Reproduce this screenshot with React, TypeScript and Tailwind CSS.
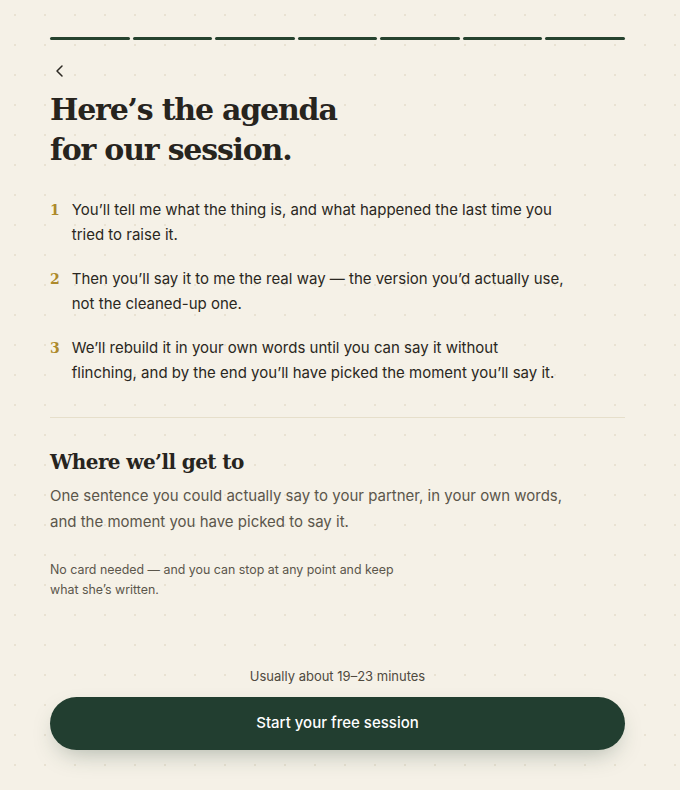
import React from "react"

const serif = "font-['DejaVu_Serif',serif]"

const steps = [
  "You’ll tell me what the thing is, and what happened the last time you tried to raise it.",
  "Then you’ll say it to me the real way — the version you’d actually use, not the cleaned-up one.",
  "We’ll rebuild it in your own words until you can say it without flinching, and by the end you’ll have picked the moment you’ll say it.",
]

export default function App() {
  return (
    <div className="min-h-screen bg-[#f5f1e7] bg-[radial-gradient(#e9e2d2_1px,transparent_1.2px)] bg-[size:30px_30px] font-['Inter',sans-serif] text-[#2a2721]">
      <div className="ml-[50px] w-[575px] pt-[37px] pb-[42px]">
        <div className="flex gap-[3px]">
          {Array.from({ length: 7 }).map((_, i) => (
            <div key={i} className="h-[3px] flex-1 rounded-full bg-[#26432f]" />
          ))}
        </div>

        <button type="button" aria-label="Back" className="mt-[24px] ml-[4px] block text-[#2c2923]">
          <svg width="12" height="14" viewBox="0 0 12 14" fill="none" stroke="currentColor" strokeWidth="1.5" strokeLinecap="round" strokeLinejoin="round">
            <path d="M8 2 3 7l5 5" />
          </svg>
        </button>

        <h1 className={`${serif} mt-[12px] text-[30px] leading-[40px] font-bold tracking-[-0.04em] text-[#27241e]`}>
          Here’s the agenda
          <br />
          for our session.
        </h1>

        <ol className="mt-[27px] flex flex-col gap-[19px]">
          {steps.map((s, i) => (
            <li key={i} className="flex items-baseline gap-[12px] pr-[60px]">
              <span className={`${serif} text-[14px] font-bold text-[#ad8a2c]`}>{i + 1}</span>
              <span className="text-[15px] leading-[25px]">{s}</span>
            </li>
          ))}
        </ol>

        <div className="mt-[32px] h-px bg-[#e6dfcb]" />

        <h2 className={`${serif} mt-[30px] text-[20px] leading-[28px] font-bold tracking-[-0.03em] text-[#27241e]`}>
          Where we’ll get to
        </h2>
        <p className="mt-[7px] pr-[60px] text-[15px] leading-[26px] text-[#5b564b]">
          One sentence you could actually say to your partner, in your own words, and the moment you have picked to say it.
        </p>

        <p className="mt-[25px] w-[360px] text-[12.4px] leading-[20px] text-[#5b564b]">
          No card needed — and you can stop at any point and keep what she’s written.
        </p>

        <p className="mt-[67px] text-center text-[13px] text-[#4f4a40]">Usually about 19–23 minutes</p>
        <button
          type="button"
          className="mt-[10px] h-[53px] w-full rounded-full bg-[#223e30] text-[15px] font-medium text-white shadow-[0_10px_24px_-8px_rgb(34_62_48/0.35)]"
        >
          Start your free session
        </button>
      </div>
    </div>
  )
}
